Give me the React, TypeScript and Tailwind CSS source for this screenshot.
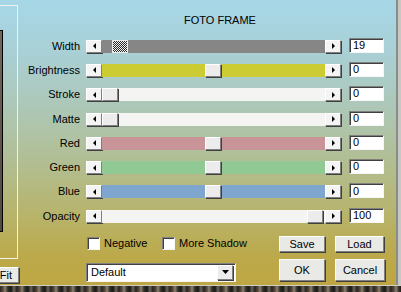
import type { ReactNode } from "react";

type SliderRow = {
  label: string;
  track: string;
  thumb: number;
  value: string;
  focused?: boolean;
};

const ROWS: SliderRow[] = [
  { label: "Width", track: "bg-[#868686]", thumb: 10, value: "19", focused: true },
  { label: "Brightness", track: "bg-[#cbcb34]", thumb: 103, value: "0" },
  { label: "Stroke", track: "bg-[#f4f4f2]", thumb: 0, value: "0" },
  { label: "Matte", track: "bg-[#f4f4f2]", thumb: 0, value: "0" },
  { label: "Red", track: "bg-[#c99497]", thumb: 103, value: "0" },
  { label: "Green", track: "bg-[#90c994]", thumb: 103, value: "0" },
  { label: "Blue", track: "bg-[#7fa6cf]", thumb: 103, value: "0" },
  { label: "Opacity", track: "bg-[#f4f4f2]", thumb: 205, value: "100" },
];

const raised =
  "border border-t-white border-l-white border-r-[#808080] border-b-[#808080] shadow-[1px_1px_0_#404040]";
const sunken =
  "border border-t-[#808080] border-l-[#808080] border-r-[#f6f6f6] border-b-[#f6f6f6] shadow-[inset_1px_1px_0_#404040]";

function Arrow({ dir }: { dir: "left" | "right" | "down" }) {
  if (dir === "down") {
    return (
      <svg width="7" height="4" viewBox="0 0 7 4">
        <path d="M0 0H7L3.5 4Z" fill="#000" />
      </svg>
    );
  }
  return (
    <svg width="3" height="6" viewBox="0 0 3 6">
      <path d={dir === "left" ? "M3 0V6L0 3Z" : "M0 0V6L3 3Z"} fill="#000" />
    </svg>
  );
}

function ArrowButton({ dir }: { dir: "left" | "right" }) {
  return (
    <div className={`flex h-[13px] w-[16px] shrink-0 items-center justify-center bg-[#f4f4f4] ${raised}`}>
      <Arrow dir={dir} />
    </div>
  );
}

function Slider({ row }: { row: SliderRow }) {
  return (
    <div className="flex h-[13px] w-[255px] shrink-0">
      <ArrowButton dir="left" />
      <div className={`relative h-[13px] flex-1 ${row.track}`}>
        <div
          className={`absolute top-0 h-[13px] w-[16px] ${
            row.focused
              ? "border border-[#e8e8e8] bg-[repeating-conic-gradient(#2a2a2a_0%_25%,#f0f0f0_0%_50%)] bg-[length:2px_2px]"
              : `bg-[#ececec] ${raised}`
          }`}
          style={{ left: row.thumb }}
        />
      </div>
      <ArrowButton dir="right" />
    </div>
  );
}

function Button({ className, children }: { className: string; children: ReactNode }) {
  return (
    <div className={`flex items-center justify-center bg-[#e9e9e6] text-[11px] text-black ${raised} ${className}`}>
      {children}
    </div>
  );
}

function Checkbox({ label, className }: { label: string; className: string }) {
  return (
    <div className={`flex items-center gap-[4px] ${className}`}>
      <div className={`h-[13px] w-[13px] bg-white ${sunken}`} />
      <span className="text-[11px] leading-[13px]">{label}</span>
    </div>
  );
}

export default function App() {
  return (
    <div className="flex h-[292px] w-[401px] flex-col overflow-hidden font-['Liberation_Sans',Arial,sans-serif] text-black">
      <div className="flex h-[285px] bg-[linear-gradient(180deg,#a6d7e7_0%,#a9d0d6_18%,#adc7b6_38%,#b1bf96_55%,#b7b46c_75%,#bca94a_90%,#bea643_100%)]">
        {/* left preview column */}
        <div className="flex w-[18px] shrink-0 flex-col">
          <div className="mt-[5px] h-[254px] border-y border-r border-[#eef3ee]">
            <div className="mt-[24px] h-[202px] w-[3px] border-y border-r border-black bg-[linear-gradient(180deg,#6e6a60,#5d5345_60%,#4e4a42)]" />
          </div>
          <Button className="ml-[-22px] mt-[8px] h-[16px] w-[41px] shrink-0 !justify-end pr-[6px]">Fit</Button>
        </div>

        {/* main */}
        <div className="flex flex-1 flex-col">
          <div className="mt-[14px] h-[13px] pl-[166px] text-[11px] leading-[13px]">FOTO FRAME</div>
          <div className="mt-[7px] flex flex-col">
            {ROWS.map((row) => (
              <div key={row.label} className="flex h-[24.3px] items-center">
                <div className="w-[62px] shrink-0 text-right text-[11px] leading-[13px]">{row.label}</div>
                <div className="ml-[6px]">
                  <Slider row={row} />
                </div>
                <div className={`ml-[8px] flex h-[15px] w-[35px] -translate-y-[1px] items-center bg-white pl-[3px] text-[11px] ${sunken}`}>
                  {row.value}
                </div>
              </div>
            ))}
          </div>

          <div className="ml-[68px] mt-[7.6px] flex">
            <div className="flex w-[193px] flex-col">
              <div className="flex h-[16px] items-center">
                <Checkbox label="Negative" className="ml-[1px] w-[75px]" />
                <Checkbox label="More Shadow" className="" />
              </div>
              <div className={`mt-[11px] flex h-[19px] w-[150px] items-center justify-between bg-white pl-[4px] pr-[2px] text-[11px] ${sunken}`}>
                <span>Default</span>
                <div className={`flex h-[15px] w-[16px] items-center justify-center bg-[#ececec] ${raised}`}>
                  <Arrow dir="down" />
                </div>
              </div>
            </div>
            <div className="grid grid-cols-[46px_50px] gap-x-[10px] gap-y-[7px]">
              <Button className="h-[16px]">Save</Button>
              <Button className="h-[16px] w-[49px]">Load</Button>
              <Button className="h-[22px]">OK</Button>
              <Button className="h-[22px]">Cancel</Button>
            </div>
          </div>
        </div>

        {/* window edge */}
        <div className="w-[2px] shrink-0 bg-[#8a8c8a]" />
        <div className="w-[3px] shrink-0 bg-[#c6c8c4]" />
      </div>
      <div className="h-[1px] bg-[#cfcfc6]" />
      <div className="flex-1 bg-[repeating-linear-gradient(90deg,#2a2620_0px,#5a4a3a_3px,#8a8070_5px,#30302a_8px,#1a1814_11px,#6a6458_14px,#222_17px)]" />
    </div>
  );
}
